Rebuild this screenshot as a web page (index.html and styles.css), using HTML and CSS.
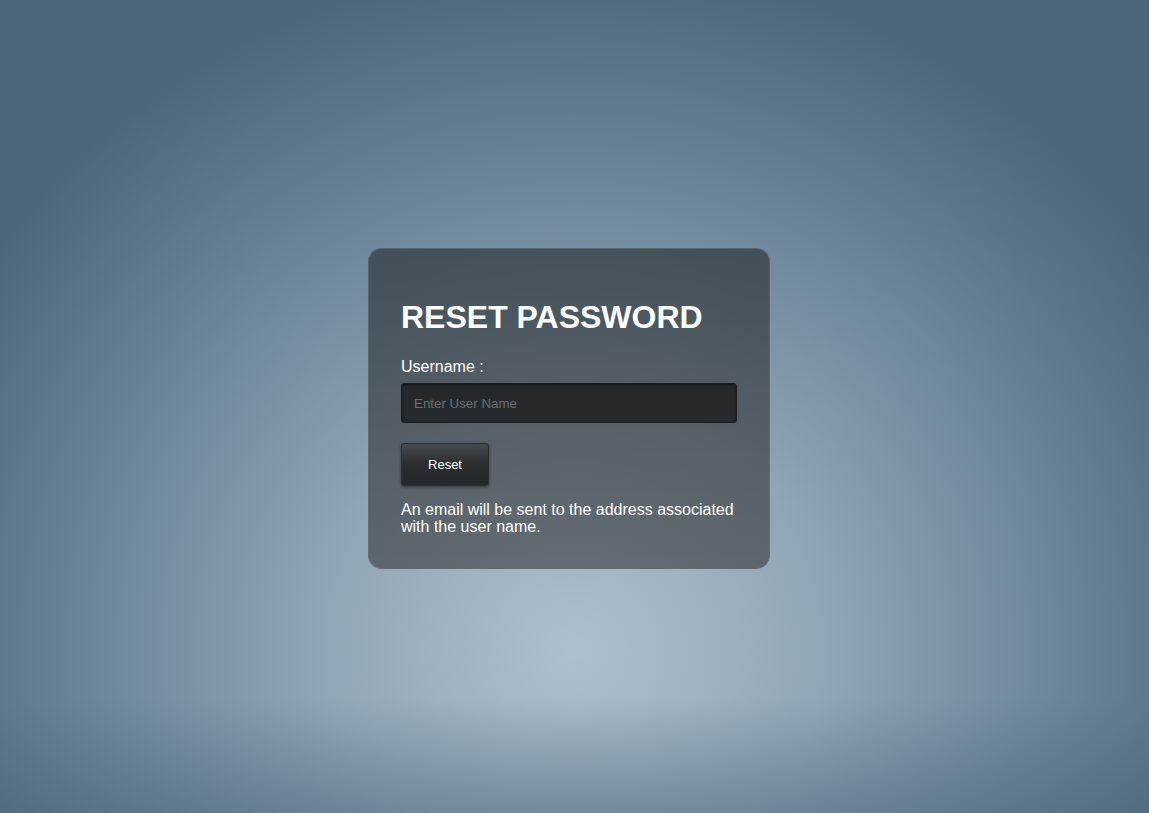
FILE: index.html
```html
<!DOCTYPE html>
<html lang="en">
<head>
<meta charset="utf-8">
<title>Reset Password</title>
<link rel="stylesheet" href="styles.css">
</head>
<body>
<main class="page">
  <form class="card">
    <h1 class="title">RESET PASSWORD</h1>
    <label class="label" for="username">Username :</label>
    <input class="input" id="username" type="text" placeholder="Enter User Name">
    <button class="btn" type="button">Reset</button>
    <p class="note">An email will be sent to the address associated with the user name.</p>
  </form>
</main>
</body>
</html>
```

FILE: styles.css
```css
html, body {
  margin: 0;
  padding: 0;
  height: 100%;
}
body {
  font-family: "Liberation Sans", Arial, sans-serif;
  color: #fff;
  background:
    linear-gradient(to bottom, rgba(70, 95, 115, 0) 86%, rgba(70, 95, 118, 0.45) 100%),
    radial-gradient(ellipse 62% 85% at 50% 80%, #aec0cc 0%, #91a6b6 35%, #6f889b 65%, #4c667a 100%);
}
.page {
  box-sizing: border-box;
  height: 100%;
  padding-right: 11px;
  display: flex;
  align-items: center;
  justify-content: center;
}
.card {
  box-sizing: border-box;
  width: 402px;
  margin-top: 4px;
  padding: 32px 32px 33px;
  border: 1px solid rgba(110, 120, 128, 0.45);
  border-radius: 14px;
  background: linear-gradient(to bottom, rgba(35, 38, 40, 0.58), rgba(40, 40, 40, 0.52));
  display: flex;
  flex-direction: column;
  align-items: flex-start;
}
.title {
  margin: 18px 0 0;
  font-size: 32px;
  font-weight: bold;
  line-height: 36px;
}
.label {
  margin-top: 23px;
  font-size: 16px;
  line-height: 18px;
}
.input {
  box-sizing: border-box;
  width: 336px;
  height: 40px;
  margin-top: 7px;
  padding: 0 12px;
  border: 1px solid #1a1d1f;
  border-radius: 3px;
  background: #25292b;
  box-shadow: inset 0 1px 2px rgba(0, 0, 0, 0.5);
  color: #ddd;
  font-family: "Liberation Sans", Arial, sans-serif;
  font-size: 13.33px;
  outline: none;
}
.input::placeholder {
  color: #6c7073;
}
.btn {
  box-sizing: border-box;
  width: 88px;
  height: 43px;
  margin-top: 20px;
  border: 1px solid #2b2f32;
  border-radius: 3px;
  background: linear-gradient(to bottom, #474c4f 0%, #2b2f32 45%, #24282a 100%);
  box-shadow: 0 1px 3px rgba(0, 0, 0, 0.45);
  color: #fff;
  font-family: "Liberation Sans", Arial, sans-serif;
  font-size: 13px;
}
.note {
  margin: 15px 0 0;
  font-size: 16px;
  line-height: 17px;
}
```
